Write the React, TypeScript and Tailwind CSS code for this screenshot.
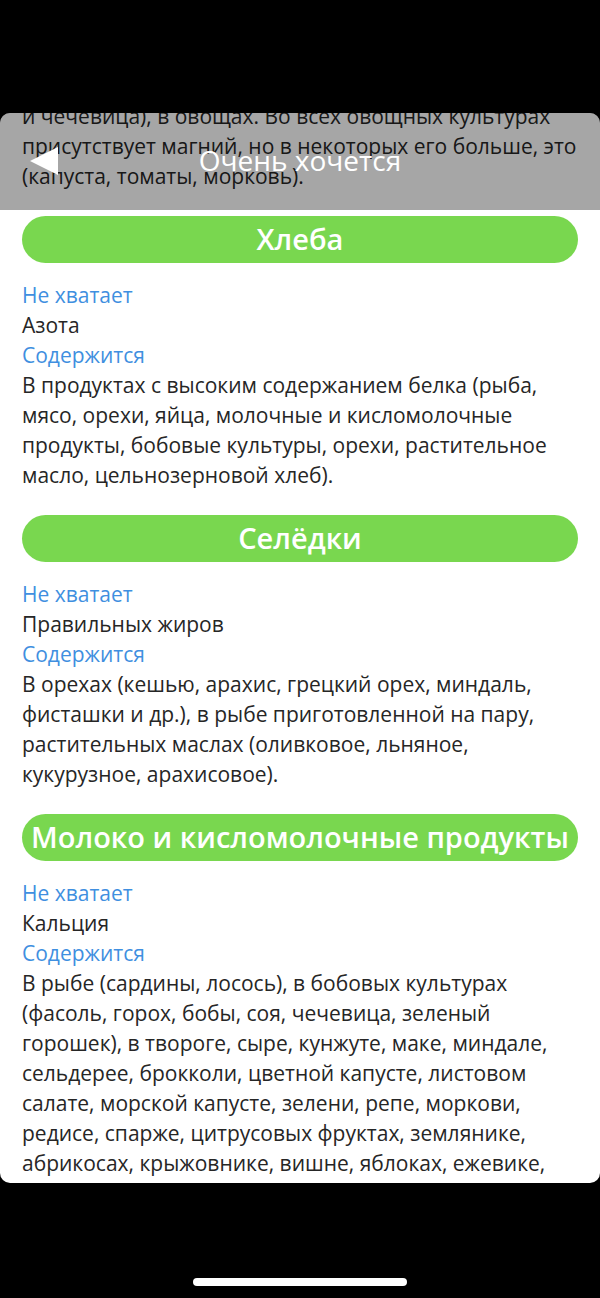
import React from 'react';

type Section = {
    title: string;
    lack: string;
    source: string;
};

const sections: Section[] = [
    {
        title: 'Хлеба',
        lack: 'Азота',
        source:
            'В продуктах с высоким содержанием белка (рыба, мясо, орехи, яйца, молочные и кисломолочные продукты, бобовые культуры, орехи, растительное масло, цельнозерновой хлеб).',
    },
    {
        title: 'Селёдки',
        lack: 'Правильных жиров',
        source:
            'В орехах (кешью, арахис, грецкий орех, миндаль, фисташки и др.), в рыбе приготовленной на пару, растительных маслах (оливковое, льняное, кукурузное, арахисовое).',
    },
    {
        title: 'Молоко и кисломолочные продукты',
        lack: 'Кальция',
        source:
            'В рыбе (сардины, лосось), в бобовых культурах (фасоль, горох, бобы, соя, чечевица, зеленый горошек), в твороге, сыре, кунжуте, маке, миндале, сельдерее, брокколи, цветной капусте, листовом салате, морской капусте, зелени, репе, моркови, редисе, спарже, цитрусовых фруктах, землянике, абрикосах, крыжовнике, вишне, яблоках, ежевике, смородине.',
    },
];

const SectionBlock: React.FC<{ section: Section }> = ({ section }) => (
    <div>
        <div className="mt-[25px] h-[47px] rounded-full bg-[#79d74f] flex items-center justify-center">
            <span className="text-[29px] font-semibold text-white whitespace-nowrap leading-none -mt-[3px]">{section.title}</span>
        </div>
        <div className="mt-[17px] text-[#3f8fe0]">Не хватает</div>
        <div>{section.lack}</div>
        <div className="text-[#3f8fe0]">Содержится</div>
        <p>{section.source}</p>
    </div>
);

const App: React.FC = () => {
    return (
        <div
            className="w-[600px] h-[1298px] bg-black flex flex-col overflow-hidden"
            style={{ fontFamily: '"Open Sans", "Noto Sans", sans-serif' }}
        >
            <div className="h-[113px] shrink-0" />

            <div className="relative h-[1070px] shrink-0 bg-white rounded-[10px] overflow-hidden">
                <div className="-mt-[12px] px-[22px] text-[21px] leading-[30px] text-[#262626]">
                    <p>
                        и чечевица), в овощах. Во всех овощных культурах присутствует магний, но в некоторых его больше, это (капуста, томаты, морковь).
                    </p>
                    {sections.map((s) => (
                        <SectionBlock key={s.title} section={s} />
                    ))}
                </div>

                {/* translucent nav bar over the scrolled content */}
                <div className="absolute top-0 inset-x-0 h-[97px] bg-black/35 flex items-center justify-center">
                    <svg className="absolute left-[30px] top-[34px]" width="28" height="28" viewBox="0 0 28 28">
                        <polygon points="0,14 28,0 28,28" fill="#ffffff" />
                    </svg>
                    <span className="text-[28px] text-white leading-none -mt-[3px]">Очень хочется</span>
                </div>
            </div>

            <div className="flex-1 flex items-end justify-center pb-[12px]">
                <div className="w-[214px] h-[8px] rounded-full bg-white" />
            </div>
        </div>
    );
};

export default App;
